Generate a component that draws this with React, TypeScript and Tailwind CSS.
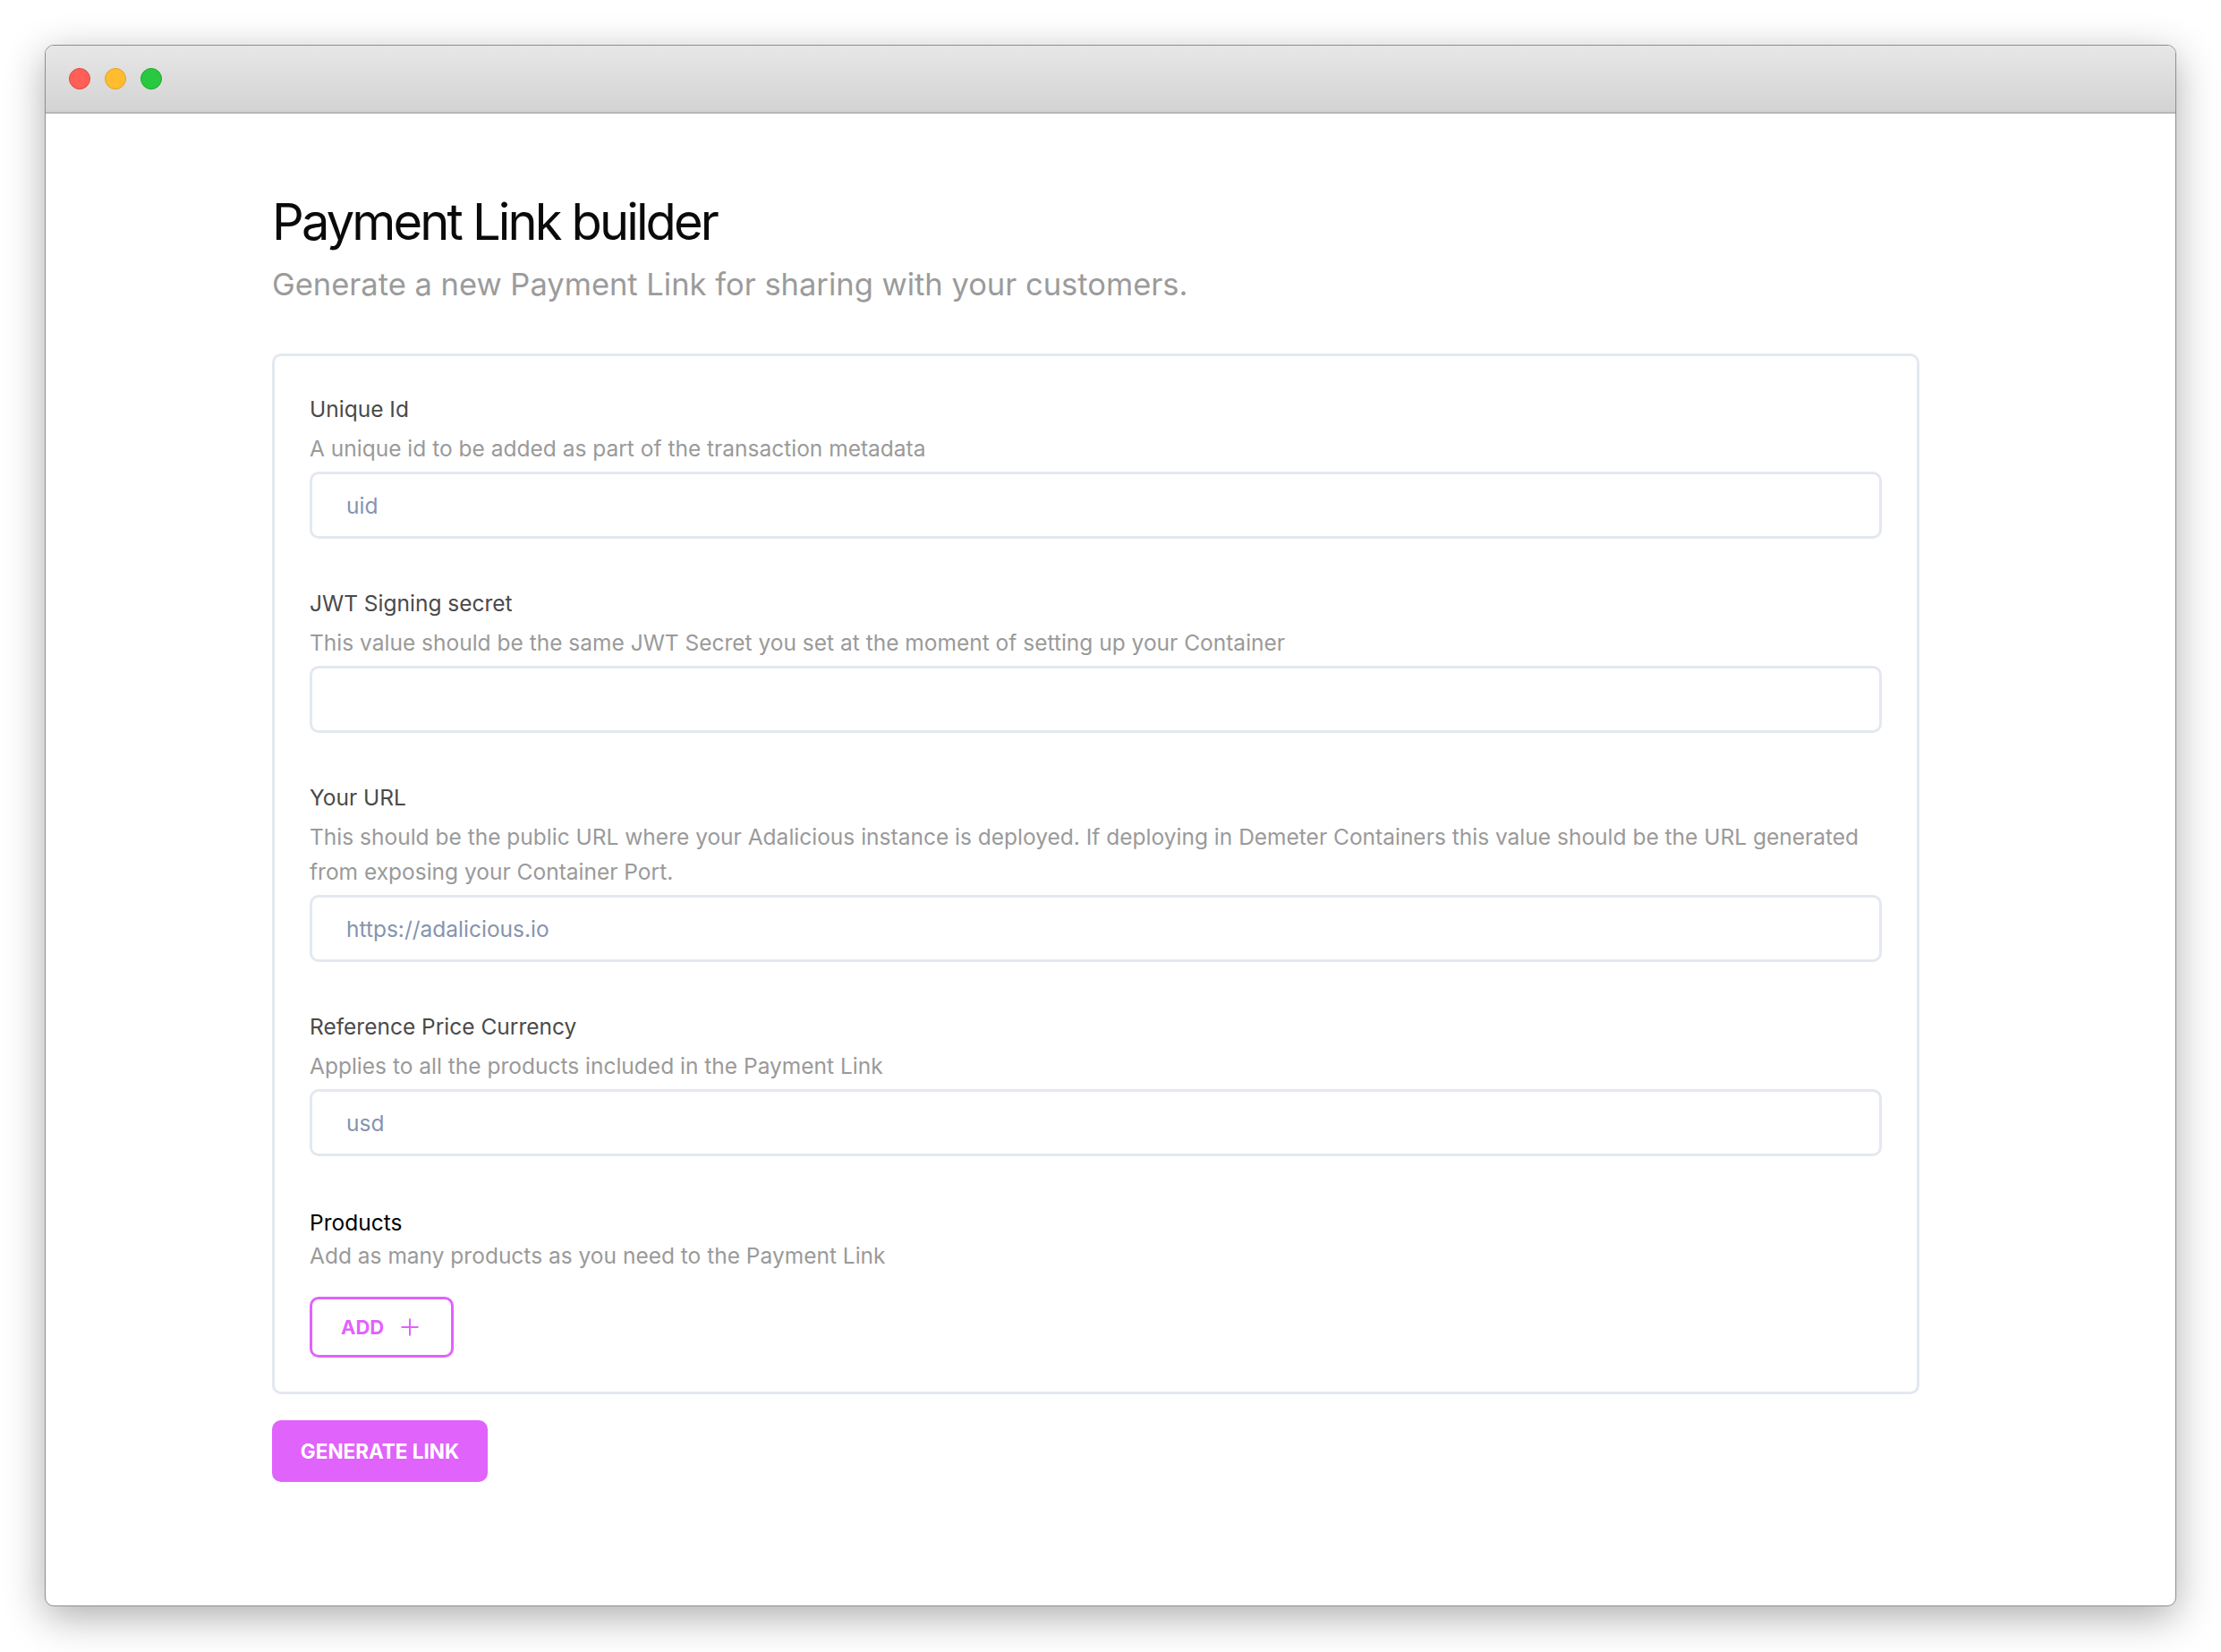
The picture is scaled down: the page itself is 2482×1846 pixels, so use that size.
import { Plus } from "lucide-react";

type FieldProps = {
  label: string;
  description: string;
  value?: string;
};

function Field({ label, description, value }: FieldProps) {
  return (
    <div className="flex flex-col">
      <label className="text-[24.5px] leading-[36px] text-[#4a4a4a]">{label}</label>
      <p className="mt-[7px] text-[24.5px] leading-[39px] text-[#9a9a9a]">{description}</p>
      <input
        type="text"
        defaultValue={value}
        className="mt-[6px] h-[75px] w-full rounded-[10px] border-[3px] border-[#e3e8f0] bg-white pl-[38px] text-[24.5px] text-[#8694ae] outline-none"
      />
    </div>
  );
}

export default function App() {
  return (
    <div className="h-[1846px] w-[2482px] bg-white pl-[50px] pt-[50px] font-['Inter',sans-serif]">
      <div className="flex h-[1745px] w-[2382px] flex-col overflow-hidden rounded-[10px] border border-[#8e8e8e] bg-white shadow-[0_12px_45px_rgba(0,0,0,0.32)]">
        <div className="flex h-[76px] shrink-0 items-center gap-[16px] border-b-2 border-[#b7b7b7] bg-gradient-to-b from-[#e7e7e7] to-[#d3d3d3] pl-[26px]">
          <span className="h-[24px] w-[24px] rounded-full border border-[#e2463f] bg-[#ff5f57]" />
          <span className="h-[24px] w-[24px] rounded-full border border-[#e1a325] bg-[#febc2e]" />
          <span className="h-[24px] w-[24px] rounded-full border border-[#1aab2e] bg-[#28c840]" />
        </div>

        <div className="flex flex-col pl-[253px] pt-[87px]">
          <h1 className="text-[56px] leading-[68px] font-normal tracking-[-2.85px] text-[#0a0a0a]">
            Payment Link builder
          </h1>
          <p className="mt-[16px] text-[34.5px] leading-[40px] text-[#9b9b9b]">
            Generate a new Payment Link for sharing with your customers.
          </p>

          <div className="mt-[57px] flex w-[1841px] flex-col gap-[54px] rounded-[10px] border-[3px] border-[#e3e8f0] px-[39px] pb-[38px] pt-[41px]">
            <Field
              label="Unique Id"
              description="A unique id to be added as part of the transaction metadata"
              value="uid"
            />
            <Field
              label="JWT Signing secret"
              description="This value should be the same JWT Secret you set at the moment of setting up your Container"
            />
            <Field
              label="Your URL"
              description="This should be the public URL where your Adalicious instance is deployed. If deploying in Demeter Containers this value should be the URL generated from exposing your Container Port."
              value="https://adalicious.io"
            />
            <Field
              label="Reference Price Currency"
              description="Applies to all the products included in the Payment Link"
              value="usd"
            />

            <div className="mt-[2px] flex flex-col">
              <h3 className="text-[24.5px] leading-[36px] text-[#000000]">Products</h3>
              <p className="text-[24.5px] leading-[39px] text-[#9a9a9a]">
                Add as many products as you need to the Payment Link
              </p>
              <button
                type="button"
                className="mt-[26px] flex h-[68px] w-[161px] items-center gap-[14px] rounded-[10px] border-[3px] border-[#e063fb] pl-[32px] text-[22px] font-bold text-[#e063fb]"
              >
                ADD
                <Plus size={30} strokeWidth={1.6} />
              </button>
            </div>
          </div>

          <button
            type="button"
            className="mt-[29px] flex h-[69px] w-[241px] items-center justify-center rounded-[10px] bg-[#e063fb] text-[22.5px] font-bold text-white"
          >
            GENERATE LINK
          </button>
        </div>
      </div>
    </div>
  );
}
